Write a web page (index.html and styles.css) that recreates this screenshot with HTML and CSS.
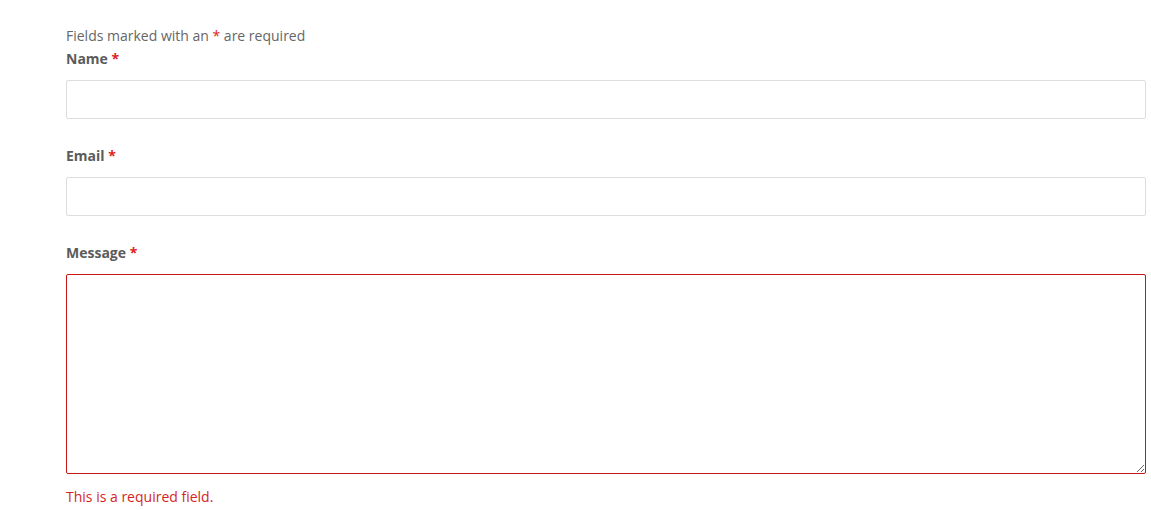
FILE: index.html
```html
<!DOCTYPE html>
<html>
<head>
<meta charset="utf-8">
<link rel="stylesheet" href="styles.css">
</head>
<body>
<form class="form">
  <p class="note">Fields marked with an <span class="req">*</span> are required</p>
  <div class="field">
    <label class="label" for="name">Name <span class="req">*</span></label>
    <input class="input" id="name" type="text">
  </div>
  <div class="field">
    <label class="label" for="email">Email <span class="req">*</span></label>
    <input class="input" id="email" type="email">
  </div>
  <div class="field">
    <label class="label" for="msg">Message <span class="req">*</span></label>
    <textarea class="input textarea invalid" id="msg"></textarea>
    <div class="error">This is a required field.</div>
  </div>
</form>
</body>
</html>
```
FILE: styles.css
```css
html, body {
  margin: 0;
  padding: 0;
  background: #fff;
}
body {
  font-family: "Open Sans", "Noto Sans", sans-serif;
  font-size: 14px;
  line-height: 22px;
  color: #666;
}
.form {
  padding: 25px 0 0 66px;
  width: 1080px;
}
.note {
  margin: 0;
  color: #666;
}
.req {
  color: #dd2222;
}
.field {
  display: flex;
  flex-direction: column;
  margin-bottom: 25px;
}
.label {
  font-weight: 700;
  color: #5b5b5b;
  padding-top: 1px;
  margin-bottom: 10px;
}
.input {
  box-sizing: border-box;
  width: 1080px;
  height: 39px;
  border: 1px solid #dddddd;
  border-radius: 2px;
  background: #fff;
  font: inherit;
  margin: 0;
  padding: 6px 10px;
}
.textarea {
  height: 200px;
  resize: vertical;
}
.invalid {
  border-color: #c91515;
}
.error {
  margin-top: 12px;
  color: #d41f1f;
}
```
